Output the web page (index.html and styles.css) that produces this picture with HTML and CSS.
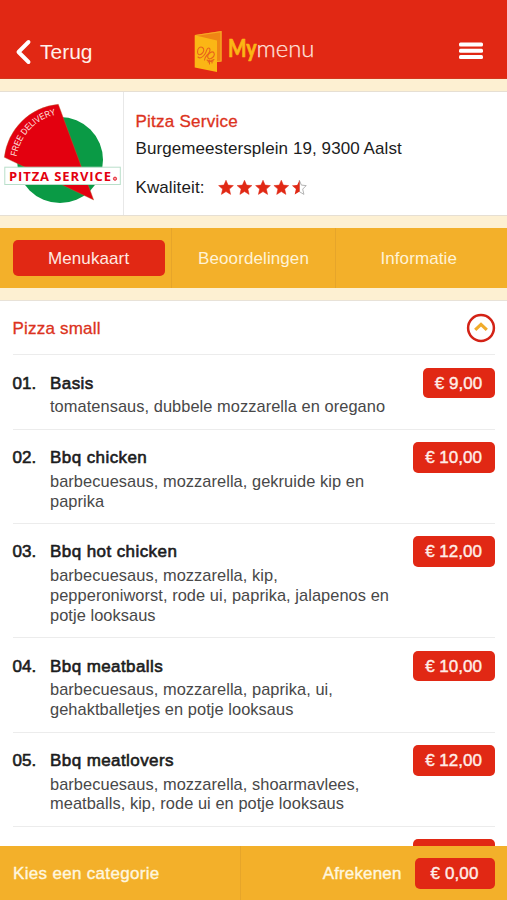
FILE: index.html
```html
<!DOCTYPE html>
<html lang="nl">
<head>
<meta charset="utf-8">
<title>Mymenu – Pitza Service</title>
<link rel="stylesheet" href="styles.css">
</head>
<body>
<div class="app">
  <header class="topbar">
    <a class="back">
      <svg width="18" height="28" viewBox="0 0 18 28"><path d="M14.500 4 4.500 14 14.500 24" fill="none" stroke="#fff" stroke-width="3.900" stroke-linecap="round" stroke-linejoin="round"/></svg>
      <span class="back-label">Terug</span>
    </a>
    <svg class="brand" width="124" height="44" viewBox="192 30 124 44">
      <path d="M195 36 221.500 32V62.500L195 66Z" fill="#ef8614"/>
      <path d="M195 36.500 221 32.700V62L217 62.500" fill="none" stroke="#f9a825" stroke-width="1.200"/>
      <path d="M194.700 36.300 217 41.500V73L194.700 68.500Z" fill="#fbb615"/>
      <g fill="none" stroke="#e8641b" stroke-width="1.100" stroke-linecap="round" stroke-linejoin="round">
        <path d="M197.500 53c0-4 3-6 5-4.500s1.500 4-.5 6-4.500 1.500-4.500-1.500Z"/>
        <path d="M198 58c2 2 5 0 7-3s1.500-6 3.500-6 2 3 0 5.500-4 3.500-4 6.500"/>
        <path d="M208 56c1.500-3 5-4 6-2s-.5 4.500-3 5.500-4-1-3-3.500Z"/>
        <path d="M207 61c2 1.500 5 1 7-.500M208 63l5-1M209.500 61v4M212 61v3"/>
      </g>
      <text class="brand-name" x="228" y="58"><tspan class="brand-my" textLength="28.500" lengthAdjust="spacingAndGlyphs">My</tspan><tspan class="brand-menu" textLength="58" lengthAdjust="spacingAndGlyphs">menu</tspan></text>
    </svg>
    <svg class="burger" width="24" height="18" viewBox="0 0 24 18"><g fill="#fff"><rect y="0.500" width="24" height="4" rx="1.500"/><rect y="6.700" width="24" height="4" rx="1.500"/><rect y="12.900" width="24" height="4" rx="1.500"/></g></svg>
  </header>

  <section class="venue">
    <div class="venue-logo">
      <svg width="123" height="123" viewBox="0 92 123 123">
        <circle cx="60" cy="160" r="43" fill="#0a9a45"/>
        <path d="M58.300 104.300 93.700 200 4.300 157.300A60 60 0 0 1 58.300 104.300Z" fill="#e3000f" stroke="#b36a35" stroke-width=".4"/>
        <path id="arc" d="M16.500 156.500A52 52 0 0 1 62 113.500" fill="none"/>
        <text class="logo-arc"><textPath href="#arc" textLength="61" lengthAdjust="spacingAndGlyphs">FREE DELIVERY</textPath></text>
        <rect x="4.800" y="167.200" width="115.500" height="17.300" fill="#fff" stroke="#b9dfca"/>
        <text class="logo-name" x="9" y="180.700" textLength="102">PITZA SERVICE</text>
        <circle cx="115" cy="178.700" r="1.600" fill="#f2a0a5" stroke="#e3000f" stroke-width=".8"/>
      </svg>
    </div>
    <div class="venue-info">
      <h1 class="venue-name">Pitza Service</h1>
      <p class="venue-address">Burgemeestersplein 19, 9300 Aalst</p>
      <div class="quality">
        <span class="quality-label">Kwaliteit:</span>
        <svg width="92" height="18" viewBox="0 0 92 18">
          <defs><path id="star" d="M8 1.200 10.100 6.100 15.400 6.600 11.400 10.100 12.600 15.400 8 12.600 3.400 15.400 4.600 10.100 .6 6.600 5.900 6.100Z"/></defs>
          <g fill="#e12814" stroke="#e12814" stroke-width=".5"><use href="#star"/><use href="#star" x="18.500"/><use href="#star" x="37"/><use href="#star" x="55.300"/></g>
          <path d="M81.300 1.200 83.400 6.100 88.200 6.600 84.700 10.100 85.900 15.400 81.300 12.600Z" fill="#fff" stroke="#aaa" stroke-width=".9"/>
          <path d="M81.600 1.200V12.500L76.700 15.400 77.900 10.100 73.900 6.600 79.200 6.100Z" fill="#e12814"/>
        </svg>
      </div>
    </div>
  </section>

  <nav class="tabs">
    <a class="tab"><span class="tab-active">Menukaart</span></a>
    <a class="tab tab-wide">Beoordelingen</a>
    <a class="tab">Informatie</a>
  </nav>

  <main class="menu">
    <div class="category">
      <h2 class="category-name">Pizza small</h2>
      <svg width="30" height="30" viewBox="0 0 30 30"><circle cx="15" cy="15" r="12.900" fill="none" stroke="#d32216" stroke-width="2.500"/><path d="M9.200 16.900 15 11.400 20.800 16.900" fill="none" stroke="#f0ac2c" stroke-width="3.200"/></svg>
    </div>
    <article class="dish">
      <span class="num">01.</span>
      <div class="dish-text"><h3 class="dish-name">Basis</h3><p class="desc">tomatensaus, dubbele mozzarella en oregano</p></div>
      <span class="price price-short">€ 9,00</span>
    </article>
    <article class="dish">
      <span class="num">02.</span>
      <div class="dish-text"><h3 class="dish-name">Bbq chicken</h3><p class="desc">barbecuesaus, mozzarella, gekruide kip en<br>paprika</p></div>
      <span class="price">€ 10,00</span>
    </article>
    <article class="dish">
      <span class="num">03.</span>
      <div class="dish-text"><h3 class="dish-name">Bbq hot chicken</h3><p class="desc">barbecuesaus, mozzarella, kip,<br>pepperoniworst, rode ui, paprika, jalapenos en<br>potje looksaus</p></div>
      <span class="price">€ 12,00</span>
    </article>
    <article class="dish">
      <span class="num">04.</span>
      <div class="dish-text"><h3 class="dish-name">Bbq meatballs</h3><p class="desc">barbecuesaus, mozzarella, paprika, ui,<br>gehaktballetjes en potje looksaus</p></div>
      <span class="price">€ 10,00</span>
    </article>
    <article class="dish">
      <span class="num">05.</span>
      <div class="dish-text"><h3 class="dish-name">Bbq meatlovers</h3><p class="desc">barbecuesaus, mozzarella, shoarmavlees,<br>meatballs, kip, rode ui en potje looksaus</p></div>
      <span class="price">€ 12,00</span>
    </article>
    <article class="dish">
      <div class="dish-text"></div>
      <span class="price"></span>
    </article>
  </main>

  <footer class="bottombar">
    <a class="choose">Kies een categorie</a>
    <a class="checkout"><span>Afrekenen</span><span class="price price-total">€ 0,00</span></a>
  </footer>
</div>
</body>
</html>
```
FILE: styles.css
```css
* { box-sizing: border-box; }
body, h1, h2, h3, p { margin: 0; font-size: inherit; font-weight: 400; }
body { font: 17px/20px "Liberation Sans", Arial, sans-serif; color: #1c1c1c; }
svg { display: block; flex: none; }
.app { height: 900px; display: flex; flex-direction: column; overflow: hidden; background: #fdf0d2; }

.topbar { flex: none; height: 79px; padding: 25px 24px 0 14px; display: flex; align-items: center; background: #e12814; border-bottom: 1px solid #d4381c; }
.back { width: 178px; display: flex; align-items: center; gap: 8px; }
.back-label { padding-top: 1px; font-size: 21px; line-height: 24px; color: #fff0ea; }
.brand { margin-top: -2px; }
.brand-name { font-family: Lato, "Liberation Sans", sans-serif; font-size: 24px; }
.brand-my { font-weight: 700; fill: #fbb615; stroke: #fbb615; stroke-width: .7; stroke-linejoin: round; }
.brand-menu { font-weight: 300; fill: #ffe3dc; stroke: #ffe3dc; stroke-width: .25; }
.burger { margin: -1px 0 0 auto; }

.venue { flex: none; height: 125px; margin-top: 12px; display: flex; background: #fff; border-top: 1px solid #e6dfd3; border-bottom: 1px solid #e6dfd3; }
.venue-logo { width: 124px; border-right: 1px solid #e8e8e8; }
.logo-arc { font-size: 9px; fill: #ffe6e0; }
.logo-name { font: 700 13px "Open Sans", sans-serif; fill: #e3000f; }
.venue-info { padding: 20px 0 0 11.500px; }
.venue-name { color: #dc3220; letter-spacing: .25px; -webkit-text-stroke: .3px; }
.venue-address { margin-top: 7px; letter-spacing: .08px; }
.quality { margin-top: 19px; display: flex; align-items: center; }
.quality-label { width: 82px; letter-spacing: .1px; }

.tabs { flex: none; height: 60px; margin-top: 12px; display: flex; background: #f3b02a; color: #fff3d6; letter-spacing: .1px; }
.tab { width: 171px; padding: 2px 6px 0 12.500px; display: flex; align-items: center; justify-content: center; }
.tab:first-child { padding-top: 0; }
.tab-wide { width: 166px; padding: 2px 0 0; border: solid #e6a52a; border-width: 0 1px; }
.tab:last-child { padding: 2px 6px 0 0; }
.tab-active { flex: 1; height: 36px; border-radius: 5px; background: #e12814; color: #ffeae2; line-height: 38px; text-align: center; }

.menu { flex: 1; min-height: 0; margin-top: 12px; padding: 0 12.500px; background: #fff; border-top: 1px solid #e8e2d8; overflow: hidden; }
.category { height: 53px; display: flex; align-items: center; justify-content: space-between; }
.category-name { padding-top: 2px; color: #dc3220; letter-spacing: .2px; -webkit-text-stroke: .3px; }
.category svg { margin-right: -1px; }
.dish { padding: 12.500px 0 11.600px; display: flex; align-items: flex-start; border-top: 1px solid #ececec; line-height: 19.800px; }
.num { width: 37.500px; padding-top: 6px; -webkit-text-stroke: .6px; }
.dish-text { flex: 1; padding-top: 6px; }
.dish-name { letter-spacing: .42px; -webkit-text-stroke: .6px; }
.desc { margin-top: 3.900px; font-size: 16.400px; letter-spacing: .06px; color: #484848; white-space: nowrap; }
.price { flex: none; width: 82px; height: 30.500px; border-radius: 5px; background: #e12814; color: #ffeee8; line-height: 31px; text-align: center; -webkit-text-stroke: .4px; }
.price-short { width: 72px; }

.bottombar { flex: none; height: 54px; display: flex; background: #f3b02a; color: #fff6df; -webkit-text-stroke: .4px; }
.choose { width: 241px; padding-left: 13px; line-height: 55px; letter-spacing: .32px; border-right: 1px solid #e6a52a; }
.checkout { flex: 1; padding: 1px 12.500px 0 0; display: flex; align-items: center; justify-content: flex-end; gap: 13px; letter-spacing: .15px; }
.price-total { width: 80px; }
```
